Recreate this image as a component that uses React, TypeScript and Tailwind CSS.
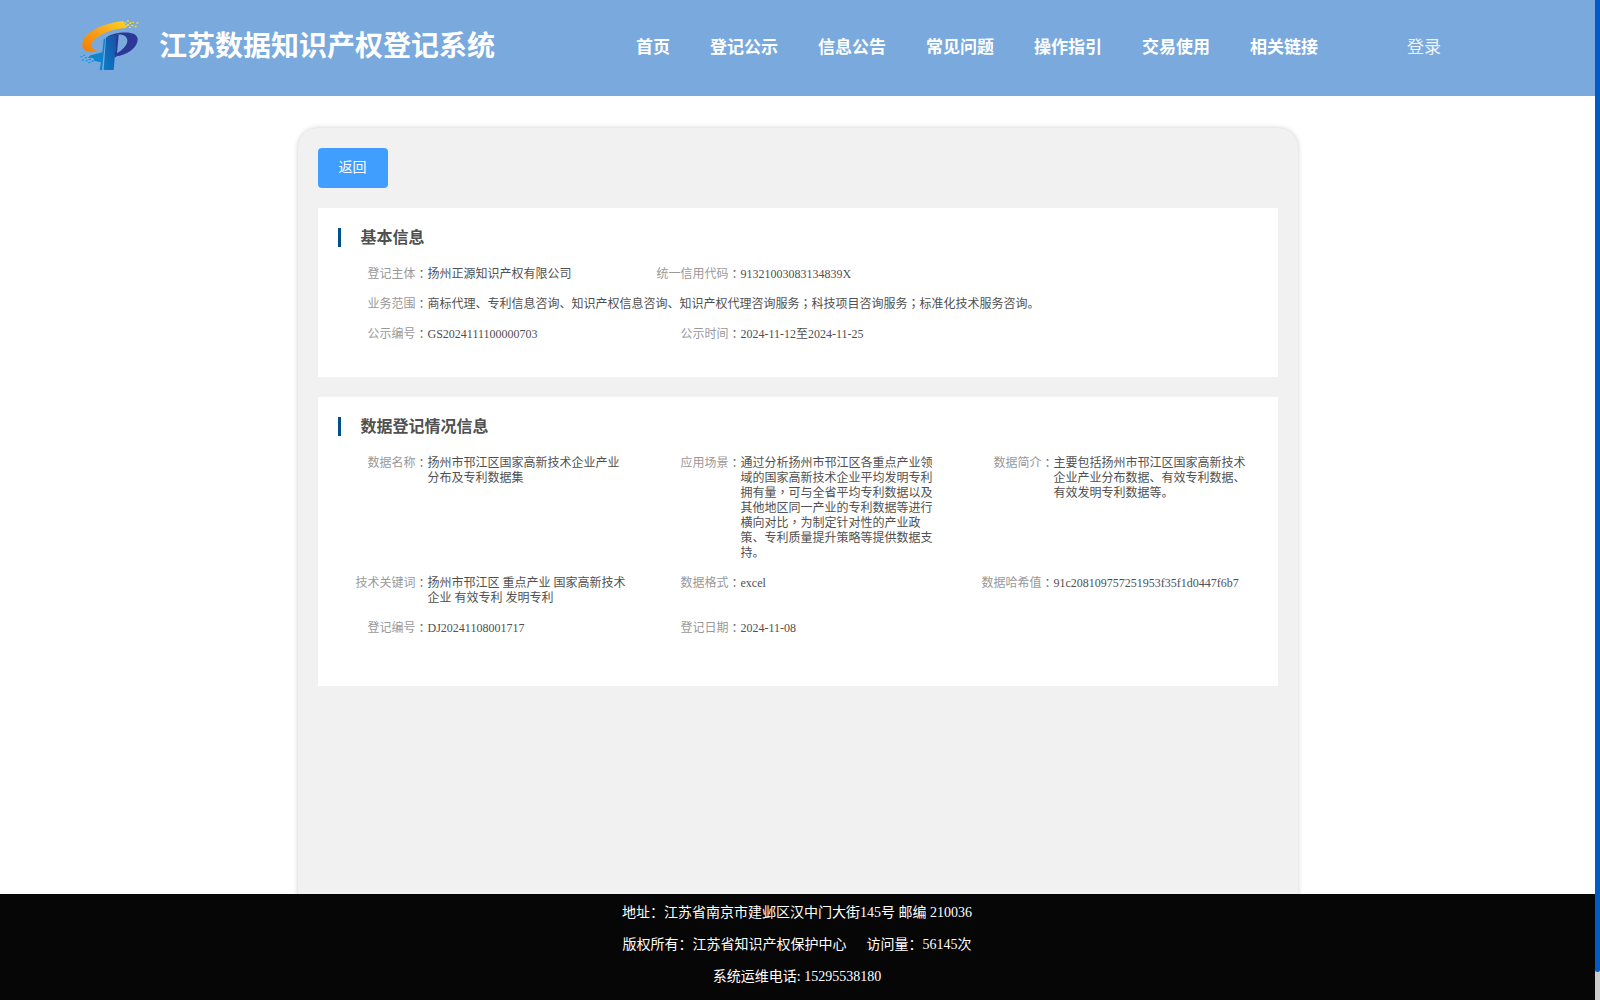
type Field = {
  label: string;
  value: string;
  wide?: boolean;
};

const navItems = ["首页", "登记公示", "信息公告", "常见问题", "操作指引", "交易使用", "相关链接"];

const basicInfo: Field[] = [
  { label: "登记主体", value: "扬州正源知识产权有限公司" },
  { label: "统一信用代码", value: "91321003083134839X" },
  {
    label: "业务范围",
    value: "商标代理、专利信息咨询、知识产权信息咨询、知识产权代理咨询服务；科技项目咨询服务；标准化技术服务咨询。",
    wide: true
  },
  { label: "公示编号", value: "GS2024111100000703" },
  { label: "公示时间", value: "2024-11-12至2024-11-25" }
];

const dataInfo: Field[] = [
  { label: "数据名称", value: "扬州市邗江区国家高新技术企业产业分布及专利数据集" },
  {
    label: "应用场景",
    value:
      "通过分析扬州市邗江区各重点产业领域的国家高新技术企业平均发明专利拥有量，可与全省平均专利数据以及其他地区同一产业的专利数据等进行横向对比，为制定针对性的产业政策、专利质量提升策略等提供数据支持。"
  },
  {
    label: "数据简介",
    value: "主要包括扬州市邗江区国家高新技术企业产业分布数据、有效专利数据、有效发明专利数据等。"
  },
  { label: "技术关键词", value: "扬州市邗江区 重点产业 国家高新技术企业 有效专利 发明专利" },
  { label: "数据格式", value: "excel" },
  { label: "数据哈希值", value: "91c208109757251953f35f1d0447f6b7" },
  { label: "登记编号", value: "DJ20241108001717" },
  { label: "登记日期", value: "2024-11-08" }
];

const Logo = () => (
  <svg className="h-[54px] w-[60px]" viewBox="30 24 180 162">
    <defs>
      <linearGradient id="swoosh" x1="0" y1="1" x2="1" y2="0">
        <stop offset="0" stopColor="#f07c00" />
        <stop offset="0.5" stopColor="#f9a11c" />
        <stop offset="1" stopColor="#ffd51e" />
      </linearGradient>
      <linearGradient id="stem" x1="0" y1="1" x2="1" y2="0">
        <stop offset="0" stopColor="#0a7cc8" />
        <stop offset="1" stopColor="#1a4fa3" />
      </linearGradient>
    </defs>
    <path
      d="M160 33 C112 38 62 56 43 84 C28 109 42 126 66 126 L88 123 C62 122 59 106 72 91 C91 70 132 56 167 54 L173 47 L164 43 Z"
      fill="url(#swoosh)"
    />
    <path
      d="M108 83 C130 67 168 64 190 71 C211 79 205 104 184 121 C170 132 151 138 139 139 L139 131 C157 121 173 105 172 91 C171 76 153 70 139 75 L139 82 Z"
      fill="#2d3796"
    />
    <path d="M108 83 Q122 75 142 74 L138 101 L131 180 L101 180 Z" fill="url(#stem)" />
    <path d="M139 75 L146 75 L140 139 L134 143 Z" fill="#2d3796" />
    <path d="M101 88 L106 85 L96 180 L89 180 L93 157 L74 153 L69 144 L54 143 L62 136 L97 127 Z" fill="#0f83cb" />
    <g fill="#ffd51e">
      <path d="M171 31h6v4h-6zM163 37h6v4h-6zM178 37h6v5h-6zM187 35h5v4h-5zM171 42h6v5h-6zM184 44h6v5h-6zM199 37h6v4h-6zM194 47h6v5h-6zM177 50h6v4h-6z" />
    </g>
    <g fill="#1597dc">
      <path d="M32 138h5v4h-5zM40 134h5v4h-5zM45 141h6v4h-6zM36 148h5v4h-5zM47 150h6v4h-6zM56 146h7v5h-7zM55 156h6v4h-6zM65 151h6v5h-6z" />
    </g>
  </svg>
);

// commas and semicolons sit in the middle of their cell
const renderValue = (value: string) =>
  value.split(/([，；])/).map((part, index) =>
    part === "，" || part === "；" ? (
      <span key={index} className="font-['Noto_Sans_CJK_TC',sans-serif] leading-none">
        {part}
      </span>
    ) : (
      part
    )
  );

const FieldItem = ({ label, value, wide }: Field) => (
  <div className={wide ? "col-span-3 mb-[15px] flex" : "mb-[15px] flex"}>
    <div className="flex w-[90px] shrink-0 justify-end whitespace-nowrap text-[#999]">
      {label}
      <span className="-mt-px font-['Noto_Sans_CJK_TC',sans-serif] text-[#666]">：</span>
    </div>
    <div className={wide ? "w-[800px]" : "w-[200px]"}>{renderValue(value)}</div>
  </div>
);

const Panel = ({ title, fields, className }: { title: string; fields: Field[]; className: string }) => (
  <section className={`bg-white pt-5 pl-5 ${className}`}>
    <h2 className="flex h-[19px] items-center border-l-3 border-[#00508e] pl-5 text-base leading-[19px] font-bold text-[#505050]">
      {title}
    </h2>
    <div className="mt-5 grid grid-cols-[repeat(3,313px)] text-xs leading-[15px] text-[#505050]">
      {fields.map((field) => (
        <FieldItem key={field.label} {...field} />
      ))}
    </div>
  </section>
);

export default function App() {
  return (
    <div className="flex h-[1000px] overflow-hidden bg-white font-['Liberation_Serif','Noto_Sans_CJK_SC',serif]">
      <div className="flex w-[1595px] flex-col">
        <header className="flex h-24 shrink-0 items-center bg-[#79a9dd] pl-20 text-white">
          <div className="flex w-[556px] items-center pb-1.5">
            <Logo />
            <h1 className="ml-[19px] pt-[3px] text-[28px] leading-9 font-bold">江苏数据知识产权登记系统</h1>
          </div>
          <nav className="flex gap-10 text-[17px] font-bold">
            {navItems.map((item) => (
              <a key={item}>{item}</a>
            ))}
          </nav>
          <a className="ml-[89px] text-[17px] text-white/85">登录</a>
        </header>

        <main className="flex min-h-0 flex-1 justify-center overflow-hidden pt-8">
          <div className="h-[900px] w-[1000px] rounded-[20px] bg-[#f1f1f1] p-5 shadow-[0_0_5px_rgba(0,0,0,0.2)]">
            <button className="h-10 w-[70px] rounded bg-[#409eff] text-sm text-white">返回</button>
            <Panel title="基本信息" fields={basicInfo} className="mt-5 h-[169px]" />
            <Panel title="数据登记情况信息" fields={dataInfo} className="mt-5 h-[289px]" />
          </div>
        </main>

        <footer className="h-[106px] shrink-0 bg-[#060606] pt-[3px] pr-px text-center text-sm leading-8 text-white">
          <p>地址：江苏省南京市建邺区汉中门大街145号 邮编 210036</p>
          <p>
            版权所有：江苏省知识产权保护中心<span className="ml-5">访问量：56145次</span>
          </p>
          <p>系统运维电话: 15295538180</p>
        </footer>
      </div>

      {/* scrollbar */}
      <div className="w-[5px] bg-[#ccc]">
        <div className="h-[972px] rounded-b-sm bg-[#005bc5]" />
      </div>
    </div>
  );
}
